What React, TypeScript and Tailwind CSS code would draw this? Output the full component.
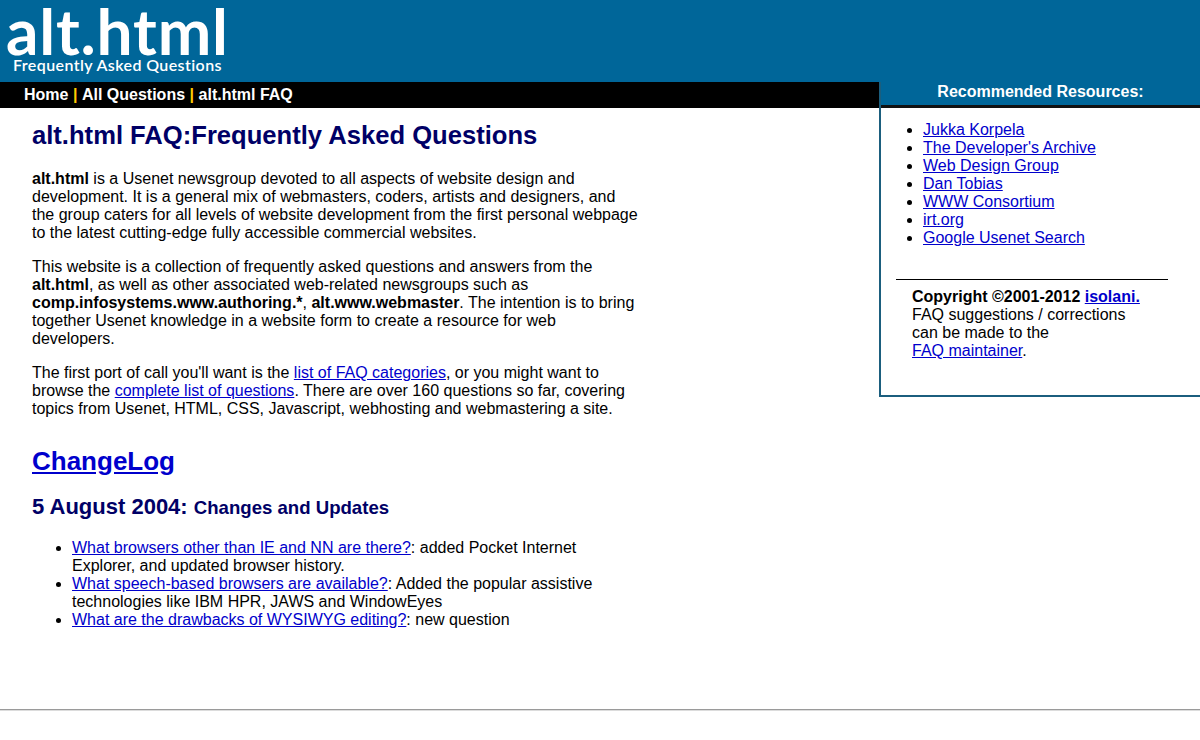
import React from "react";

const arial = { fontFamily: '"Liberation Sans", Arial, sans-serif' };

export default function App() {
  return (
    <div className="bg-white min-h-[740px] text-black text-[16px] leading-[18px]" style={arial}>
      {/* Header */}
      <div className="h-[82px] bg-[#006699] relative">
        <div className="pl-[6px] pt-[0px]" style={{ fontFamily: 'Lato, "Noto Sans", sans-serif' }}>
          <div className="text-white font-bold text-[64px] leading-[62px] tracking-[0.8px]">alt.html</div>
          <div className="text-white font-semibold text-[16px] leading-[16px] pl-[7px] -mt-[5px] tracking-[0.4px]">
            Frequently Asked Questions
          </div>
        </div>
      </div>

      <div className="flex">
        {/* Left column */}
        <div className="w-[879px] shrink-0">
          <div className="h-[26px] bg-black flex items-center pl-[24px] text-white font-bold text-[16px]">
            <a className="text-white" href="#">Home</a>
            <span className="text-[#ffcc00] mx-[4.5px]">|</span>
            <a className="text-white" href="#">All Questions</a>
            <span className="text-[#ffcc00] mx-[4.5px]">|</span>
            <a className="text-white" href="#">alt.html FAQ</a>
          </div>

          <div className="pl-[32px] w-[642px] pt-[13px]">
            <h1 className="text-[25.6px] leading-[28px] font-bold text-[#000066]">
              alt.html FAQ:Frequently Asked Questions
            </h1>
            <p className="mt-[21px]">
              <b>alt.html</b> is a Usenet newsgroup devoted to all aspects of website design and development. It is a general mix of webmasters, coders, artists and designers, and the group caters for all levels of website development from the first personal webpage to the latest cutting-edge fully accessible commercial websites.
            </p>
            <p className="mt-[16px]">
              This website is a collection of frequently asked questions and answers from the <b>alt.html</b>, as well as other associated web-related newsgroups such as <b>comp.infosystems.www.authoring.*</b>, <b>alt.www.webmaster</b>. The intention is to bring together Usenet knowledge in a website form to create a resource for web developers.
            </p>
            <p className="mt-[16px]">
              The first port of call you'll want is the{" "}
              <a href="#" className="text-[#0000cc] underline">list of FAQ categories</a>, or you might want to browse the{" "}
              <a href="#" className="text-[#0000cc] underline">complete list of questions</a>. There are over 160 questions so far, covering topics from Usenet, HTML, CSS, Javascript, webhosting and webmastering a site.
            </p>
            <h2 className="mt-[28px] text-[26px] leading-[30px] font-bold">
              <a href="#" className="text-[#0000cc] underline">ChangeLog</a>
            </h2>
            <h3 className="mt-[18px] text-[22px] leading-[26px] font-bold text-[#000066]">
              5 August 2004: <span className="text-[18.6px]">Changes and Updates</span>
            </h3>
            <ul className="mt-[18px] mb-[80px] list-disc pl-[40px]">
              <li>
                <a href="#" className="text-[#0000cc] underline">What browsers other than IE and NN are there?</a>: added Pocket Internet Explorer, and updated browser history.
              </li>
              <li>
                <a href="#" className="text-[#0000cc] underline">What speech-based browsers are available?</a>: Added the popular assistive technologies like IBM HPR, JAWS and WindowEyes
              </li>
              <li>
                <a href="#" className="text-[#0000cc] underline">What are the drawbacks of WYSIWYG editing?</a>: new question
              </li>
            </ul>
          </div>
        </div>

        {/* Sidebar */}
        <div className="flex-1 self-start border-l-2 border-b-2 border-[#1b5e7e]">
          <div className="h-[26px] bg-[#006699] border-b-[3px] border-[#111111] text-white font-bold text-center leading-[20px] pt-[0px]">
            Recommended Resources:
          </div>
          <ul className="list-disc pl-[42px] mt-[13px]">
            {[
              "Jukka Korpela",
              "The Developer's Archive",
              "Web Design Group",
              "Dan Tobias",
              "WWW Consortium",
              "irt.org",
              "Google Usenet Search",
            ].map((t) => (
              <li key={t}>
                <a href="#" className="text-[#0000cc] underline">{t}</a>
              </li>
            ))}
          </ul>
          <div className="mt-[32px] ml-[15px] mr-[32px] border-t border-black"></div>
          <div className="pl-[31px] pt-[8px] pb-[35px]">
            <b>
              Copyright ©2001-2012 <a href="#" className="text-[#0000cc] underline">isolani.</a>
            </b>
            <br />
            FAQ suggestions / corrections
            <br />
            can be made to the
            <br />
            <a href="#" className="text-[#0000cc] underline">FAQ maintainer</a>.
          </div>
        </div>
      </div>

      <div className="h-[2px] border-t border-[#9a9a9a] border-b border-b-[#dcdcdc]"></div>
    </div>
  );
}
